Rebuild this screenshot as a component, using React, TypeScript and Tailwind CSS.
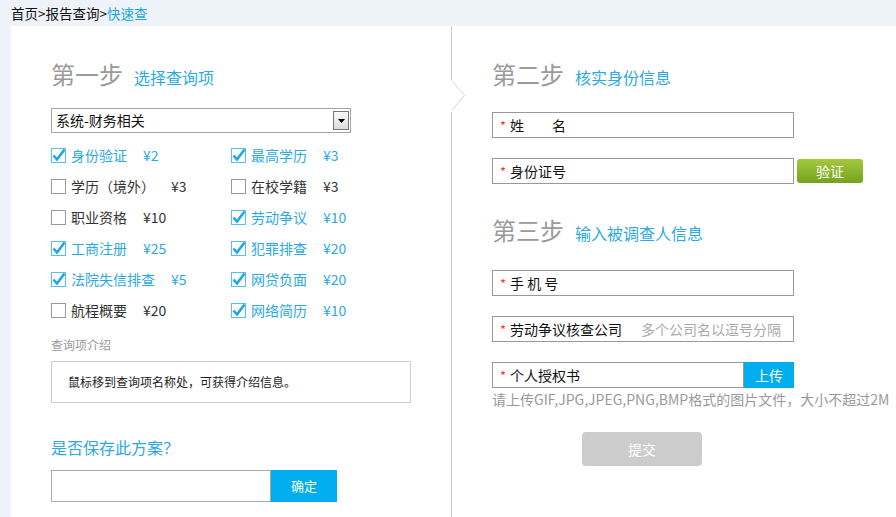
import React from "react";

const FONT = { fontFamily: '"Noto Sans CJK SC", "Noto Sans", sans-serif' };

type Item = { name: string; price: string; checked: boolean };

const col1: Item[] = [
  { name: "身份验证", price: "¥2", checked: true },
  { name: "学历（境外）", price: "¥3", checked: false },
  { name: "职业资格", price: "¥10", checked: false },
  { name: "工商注册", price: "¥25", checked: true },
  { name: "法院失信排查", price: "¥5", checked: true },
  { name: "航程概要", price: "¥20", checked: false },
];
const col2: Item[] = [
  { name: "最高学历", price: "¥3", checked: true },
  { name: "在校学籍", price: "¥3", checked: false },
  { name: "劳动争议", price: "¥10", checked: true },
  { name: "犯罪排查", price: "¥20", checked: true },
  { name: "网贷负面", price: "¥20", checked: true },
  { name: "网络简历", price: "¥10", checked: true },
];

function Check({ checked }: { checked: boolean }) {
  return (
    <svg width="15" height="15" viewBox="0 0 15 15" className="overflow-visible shrink-0">
      <rect x="0.5" y="0.5" width="14" height="14" fill="#fff" stroke={checked ? "#55c0ea" : "#9a9a9a"} />
      {checked && (
        <path d="M2.5 7.5 L6 11.5 L13.5 1.5" fill="none" stroke="#1fa8e0" strokeWidth="2.6" />
      )}
    </svg>
  );
}

function CheckItem({ item }: { item: Item }) {
  return (
    <div className="flex h-[31px] items-center">
      <Check checked={item.checked} />
      <span className={`ml-[5px] text-[14px] ${item.checked ? "text-[#2aaae2]" : "text-[#333]"}`}>{item.name}</span>
      <span className={`ml-[16px] text-[14px] ${item.checked ? "text-[#2aaae2]" : "text-[#333]"}`}>{item.price}</span>
    </div>
  );
}

function Heading({ step, sub }: { step: string; sub: string }) {
  return (
    <div className="flex items-baseline">
      <span className="text-[24px] leading-[32px] text-[#9a9a9a]">{step}</span>
      <span className="ml-[11px] text-[16px] text-[#2aaae2]">{sub}</span>
    </div>
  );
}

function Field({ label, placeholder, width = "w-[302px]" }: { label: string; placeholder?: string; width?: string }) {
  return (
    <div className={`flex h-[26px] ${width} items-center border border-[#999] bg-white pl-[7px]`}>
      <span className="text-[13px] text-[#f33] leading-none">*</span>
      <span className="ml-[4px] text-[14px] text-[#111] whitespace-pre">{label}</span>
      {placeholder && <span className="ml-[19px] text-[14px] text-[#aaa]">{placeholder}</span>}
    </div>
  );
}

export default function App() {
  return (
    <div className="min-h-[517px] w-[896px] overflow-hidden bg-[#eef3fa]" style={FONT}>
      <div className="flex h-[26px] items-center pl-[11px] text-[13.5px] text-[#111]">
        首页&gt;报告查询&gt;<span className="text-[#1fa8e0]">快速查</span>
      </div>
      <div className="ml-[11px] flex h-[491px] bg-white">
        {/* left */}
        <div className="w-[440px] shrink-0 pl-[40px] pt-[32px]">
          <Heading step="第一步" sub="选择查询项" />
          <div className="mt-[18px] flex h-[25px] w-[300px] items-center justify-between border border-[#a5a5a5] bg-white pl-[4px] pr-[1px]">
            <span className="text-[14px] text-[#111]">系统-财务相关</span>
            <div className="flex h-[19px] w-[16px] items-center justify-center border border-[#777] bg-gradient-to-b from-[#fafafa] to-[#dcdcdc]">
              <svg width="7" height="4" viewBox="0 0 7 4">
                <path d="M0 0 H7 L3.5 4 Z" fill="#000" />
              </svg>
            </div>
          </div>
          <div className="mt-[7px] flex">
            <div className="w-[180px]">
              {col1.map((it) => (
                <CheckItem key={it.name} item={it} />
              ))}
            </div>
            <div>
              {col2.map((it) => (
                <CheckItem key={it.name} item={it} />
              ))}
            </div>
          </div>
          <div className="mt-[11px] text-[12px] leading-[16px] text-[#999]">查询项介绍</div>
          <div className="mt-[8px] flex h-[42px] w-[360px] items-center border border-[#ccc] pl-[16px] text-[12px] text-[#222]">
            鼠标移到查询项名称处，可获得介绍信息。
          </div>
          <div className="mt-[33px] text-[16px] leading-[22px] text-[#2aaae2]">是否保存此方案？</div>
          <div className="mt-[12px] flex h-[32px]">
            <div className="h-[32px] w-[220px] border border-[#aaa] bg-white" />
            <div className="flex w-[66px] items-center justify-center bg-[#00aeef] text-[13px] text-white">确定</div>
          </div>
        </div>
        {/* divider */}
        <div className="relative w-px shrink-0 bg-[#cccccc]">
          <svg className="absolute left-0 top-[54px]" width="16" height="32" viewBox="0 0 16 32">
            <rect x="0" y="0" width="2" height="32" fill="#fff" />
            <path d="M0.5 0.5 L13.5 15.5 L0.5 30.5" fill="none" stroke="#d6d6d6" strokeWidth="1" />
          </svg>
        </div>
        {/* right */}
        <div className="flex-1 pl-[40px] pt-[32px]">
          <Heading step="第二步" sub="核实身份信息" />
          <div className="mt-[22px]">
            <Field label={"姓\u3000\u3000名"} />
          </div>
          <div className="mt-[20px] flex items-center">
            <Field label="身份证号" />
            <div className="ml-[3px] flex h-[24px] w-[66px] items-center justify-center rounded-[3px] bg-gradient-to-b from-[#a3ca3b] to-[#75a21d] text-[14px] text-white">
              验证
            </div>
          </div>
          <div className="mt-[30px]">
            <Heading step="第三步" sub="输入被调查人信息" />
          </div>
          <div className="mt-[24px]">
            <Field label="手 机 号" />
          </div>
          <div className="mt-[20px]">
            <Field label="劳动争议核查公司" placeholder="多个公司名以逗号分隔" />
          </div>
          <div className="mt-[20px] flex h-[26px]">
            <Field label="个人授权书" width="w-[252px]" />
            <div className="flex w-[50px] items-center justify-center bg-[#00aeef] text-[14px] text-white">上传</div>
          </div>
          <div className="mt-0 text-[14px] leading-[22px] text-[#999]">
            请上传GIF,JPG,JPEG,PNG,BMP格式的图片文件，大小不超过2M
          </div>
          <div className="ml-[90px] mt-[22px] flex h-[34px] w-[120px] items-center justify-center rounded-[4px] bg-[#cccccc] text-[14px] text-white">
            提交
          </div>
        </div>
      </div>
    </div>
  );
}
